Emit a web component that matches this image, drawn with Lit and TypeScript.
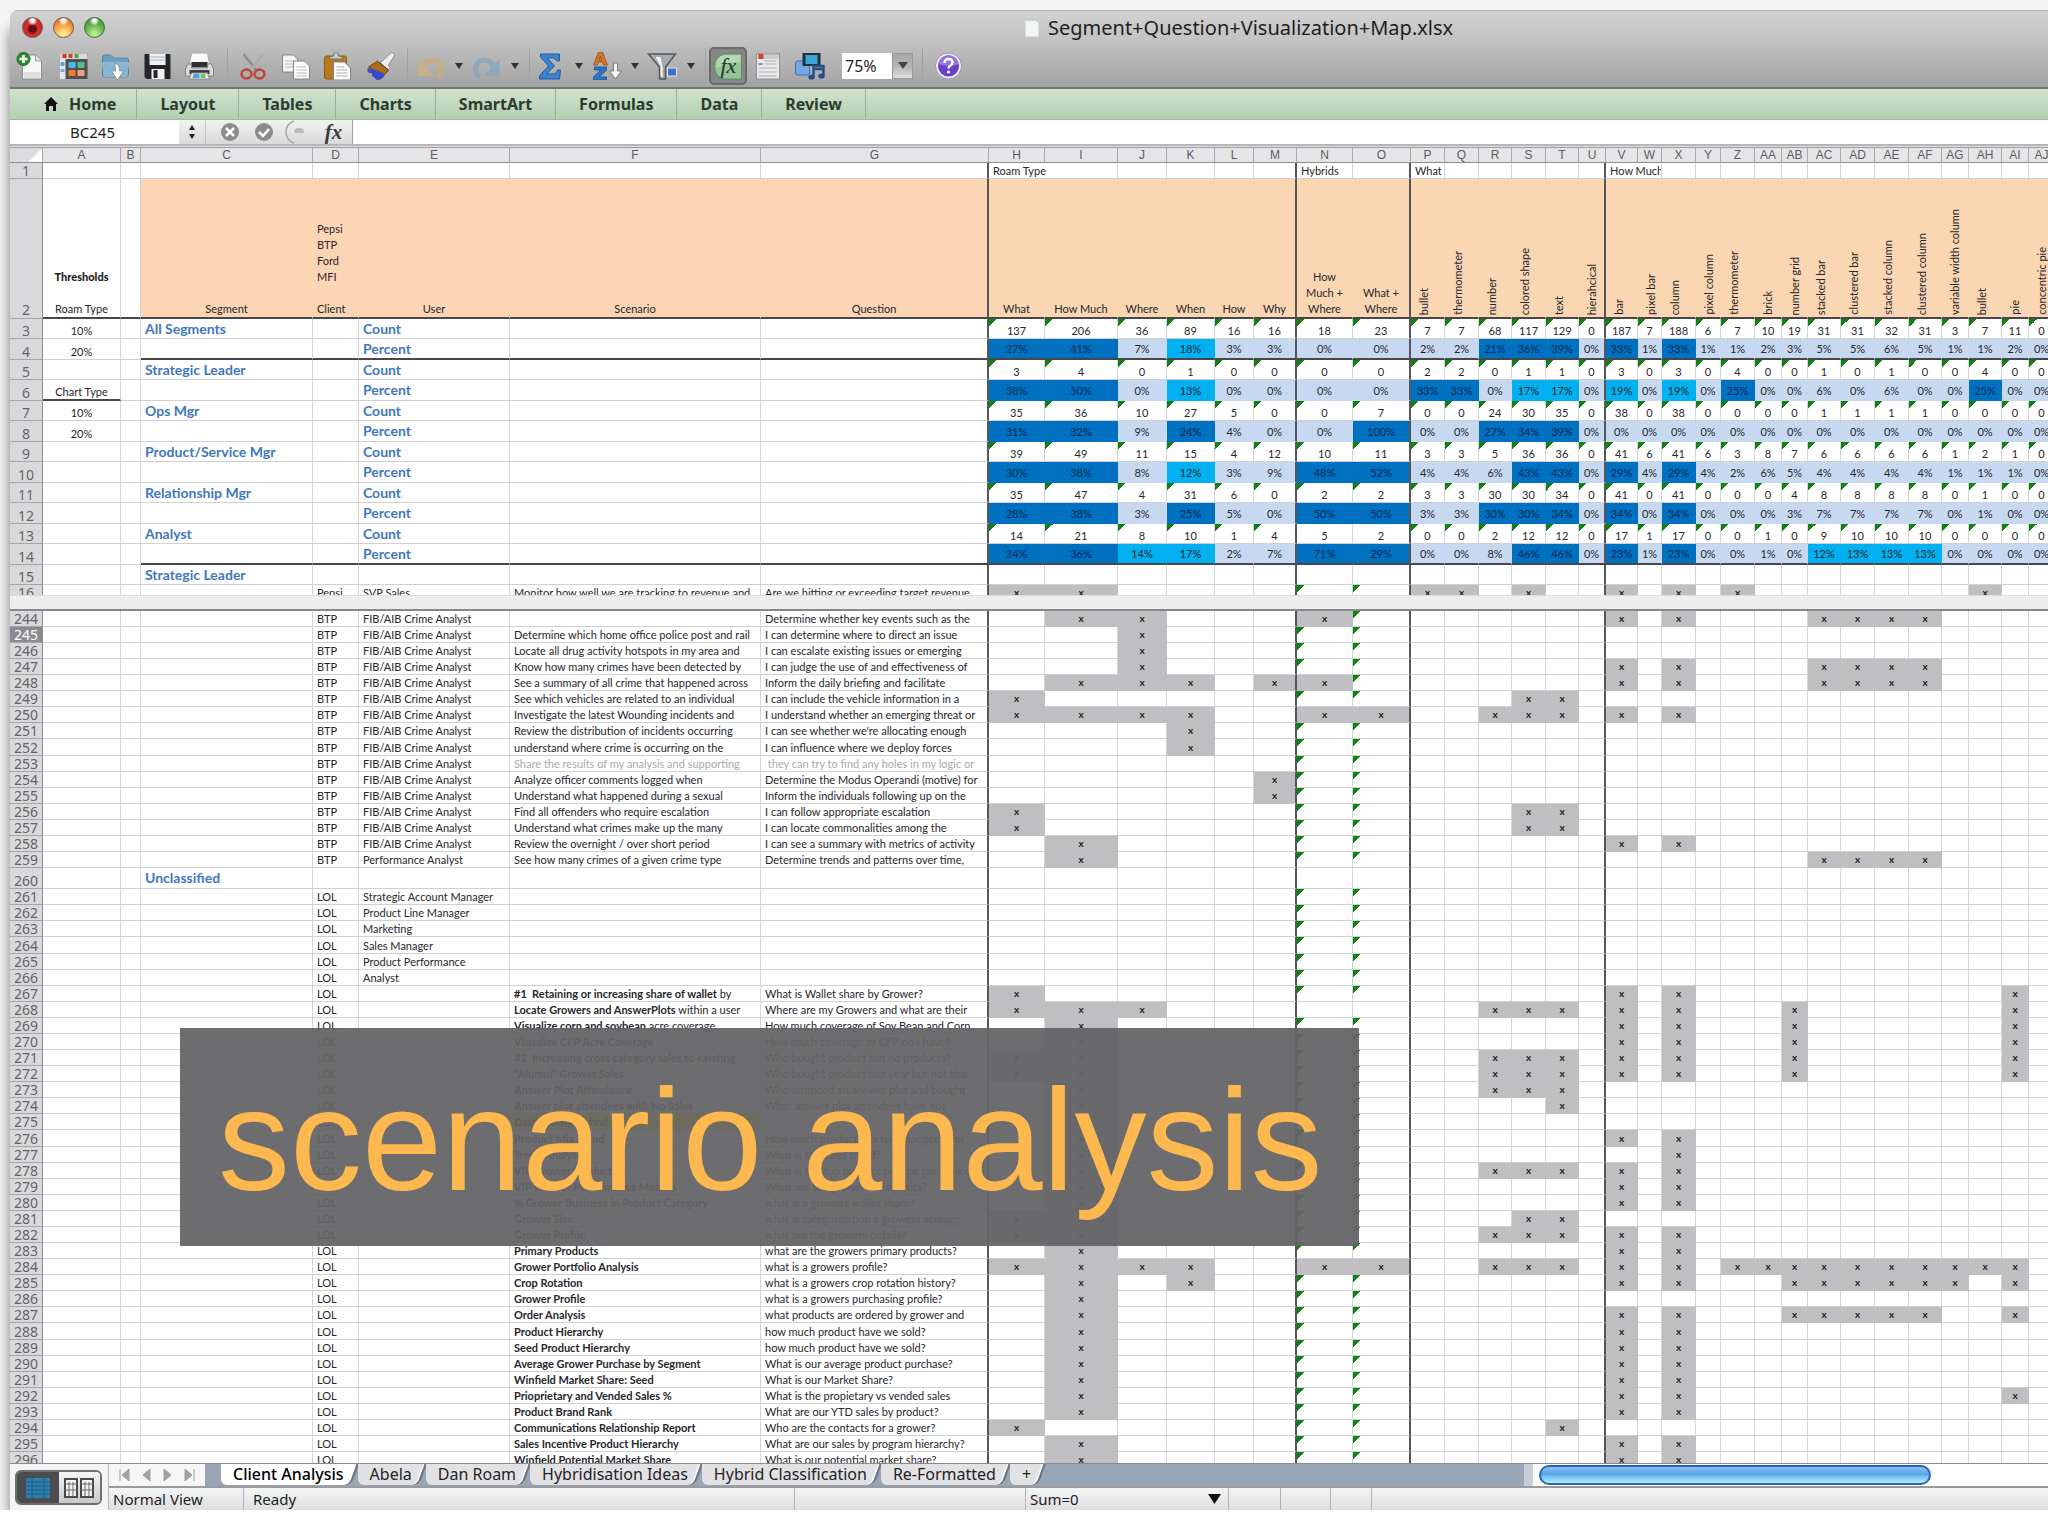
import { LitElement, html, svg, css, nothing, TemplateResult } from "lit";
import { customElement, property } from "lit/decorators.js";
import { classMap } from "lit/directives/class-map.js";

/* ---------- sheet model ---------- */

const COLS: [string, number][] = [
  ["A", 78], ["B", 20], ["C", 172], ["D", 46], ["E", 151], ["F", 251], ["G", 228],
  ["H", 56], ["I", 73], ["J", 49], ["K", 48], ["L", 39], ["M", 43], ["N", 56], ["O", 58],
  ["P", 34], ["Q", 34], ["R", 33], ["S", 34], ["T", 33], ["U", 27],
  ["V", 32], ["W", 24], ["X", 34], ["Y", 25], ["Z", 34], ["AA", 27], ["AB", 26], ["AC", 33],
  ["AD", 34], ["AE", 34], ["AF", 33], ["AG", 27], ["AH", 33], ["AI", 27], ["AJ", 26],
];
const HEAD_W = 33;
const TOTAL_W = HEAD_W + COLS.reduce((sum, c) => sum + c[1], 0);
const NAMES = COLS.map((c) => c[0]);
const DATA = NAMES.slice(7);
const HEAVY = new Set(["G", "M", "O", "U"]);

const HEADINGS: Record<string, string[]> = {
  A: ["Thresholds", "", "Roam Type"], C: ["Segment"],
  D: ["Pepsi", "BTP", "Ford", "MFI", "", "Client"],
  E: ["User"], F: ["Scenario"], G: ["Question"], H: ["What"], I: ["How Much"], J: ["Where"],
  K: ["When"], L: ["How"], M: ["Why"], N: ["How", "Much +", "Where"], O: ["What +", "Where"],
};
const VERTICAL: Record<string, string> = {
  P: "bullet", Q: "thermometer", R: "number", S: "colored shape", T: "text", U: "hierahcical",
  V: "bar", W: "pixel bar", X: "column", Y: "pixel column", Z: "thermometer", AA: "brick",
  AB: "number grid", AC: "stacked bar", AD: "clustered bar", AE: "stacked column",
  AF: "clustered column", AG: "variable width column", AH: "bullet", AI: "pie", AJ: "concentric pie",
};

const SEGMENTS: { name: string; count: string; percent: string }[] = [
  { name: "All Segments",
    count: "137 206 36 89 16 16 18 23 7 7 68 117 129 0 187 7 188 6 7 10 19 31 31 32 31 3 7 11 0",
    percent: "27 41 7 18 3 3 0 0 2 2 21 36 39 0 33 1 33 1 1 2 3 5 5 6 5 1 1 2 0" },
  { name: "Strategic Leader",
    count: "3 4 0 1 0 0 0 0 2 2 0 1 1 0 3 0 3 0 4 0 0 1 0 1 0 0 4 0 0",
    percent: "38 50 0 13 0 0 0 0 33 33 0 17 17 0 19 0 19 0 25 0 0 6 0 6 0 0 25 0 0" },
  { name: "Ops Mgr",
    count: "35 36 10 27 5 0 0 7 0 0 24 30 35 0 38 0 38 0 0 0 0 1 1 1 1 0 0 0 0",
    percent: "31 32 9 24 4 0 0 100 0 0 27 34 39 0 0 0 0 0 0 0 0 0 0 0 0 0 0 0 0" },
  { name: "Product/Service Mgr",
    count: "39 49 11 15 4 12 10 11 3 3 5 36 36 0 41 6 41 6 3 8 7 6 6 6 6 1 2 1 0",
    percent: "30 38 8 12 3 9 48 52 4 4 6 43 43 0 29 4 29 4 2 6 5 4 4 4 4 1 1 1 0" },
  { name: "Relationship Mgr",
    count: "35 47 4 31 6 0 2 2 3 3 30 30 34 0 41 0 41 0 0 0 4 8 8 8 8 0 1 0 0",
    percent: "28 38 3 25 5 0 50 50 3 3 30 30 34 0 34 0 34 0 0 0 3 7 7 7 7 0 1 0 0" },
  { name: "Analyst",
    count: "14 21 8 10 1 4 5 2 0 0 2 12 12 0 17 1 17 0 0 1 0 9 10 10 10 0 0 0 0",
    percent: "24 36 14 17 2 7 71 29 0 0 8 46 46 0 23 1 23 0 0 1 0 12 13 13 13 0 0 0 0" },
];
const THRESHOLDS: Record<number, string> = { 3: "10%", 4: "20%", 6: "Chart Type", 7: "10%", 8: "20%" };

interface Row {
  n: number; client?: string; user?: string; bold?: string; scenario?: string; question?: string;
  marks: string; flags: string; section?: string; dim?: boolean; lit?: boolean;
}
const FIB = "FIB/AIB Crime Analyst";
const btp = (n: number, scenario: string, question: string, marks = "", flags = "N O", user = FIB): Row =>
  ({ n, client: "BTP", user, scenario, question, marks, flags });
const lol = (n: number, bold: string, question: string, marks = "", flags = "N O", scenario = ""): Row =>
  ({ n, client: "LOL", bold, scenario, question, marks, flags });
const person = (n: number, user: string): Row => ({ n, client: "LOL", user, marks: "", flags: "N O" });

const ROW_16: Row = {
  n: 16, client: "Pepsi", user: "SVP Sales",
  scenario: "Monitor how well we are tracking to revenue and",
  question: "Are we hitting or exceeding target revenue",
  marks: "H I P Q S V X Z AH", flags: "N O",
};

const LOWER: Row[] = [
  btp(244, "", "Determine whether key events such as the", "I J N V X AC AD AE AF", "O"),
  btp(245, "Determine which home office police post and rail", "I can determine where to direct an issue", "J"),
  btp(246, "Locate all drug activity hotspots in my area and", "I can escalate existing issues or emerging", "J"),
  btp(247, "Know how many crimes have been detected by", "I can judge the use of and effectiveness of", "J V X AC AD AE AF"),
  btp(248, "See a summary of all crime that happened across", "Inform the daily briefing and facilitate", "I J K M N V X AC AD AE AF", "O"),
  btp(249, "See which vehicles are related to an individual", "I can include the vehicle information in a", "H S T"),
  btp(250, "Investigate the latest Wounding incidents and", "I understand whether an emerging threat or", "H I J K N O R S T V X", ""),
  btp(251, "Review the distribution of incidents occurring", "I can see whether we're allocating enough", "K"),
  btp(252, "understand where crime is occurring on the", "I can influence where we deploy forces", "K"),
  { ...btp(253, "Share the results of my analysis and supporting", "\u00a0they can try to find any holes in my logic or"), dim: true },
  btp(254, "Analyze officer comments logged when", "Determine the Modus Operandi (motive) for", "M"),
  btp(255, "Understand what happened during a sexual", "Inform the individuals following up on the", "M"),
  btp(256, "Find all offenders who require escalation", "I can follow appropriate escalation", "H S T"),
  btp(257, "Understand what crimes make up the many", "I can locate commonalities among the", "H S T"),
  btp(258, "Review the overnight / over short period", "I can see a summary with metrics of activity", "I V X"),
  btp(259, "See how many crimes of a given crime type", "Determine trends and patterns over time,", "I AC AD AE AF", "N O", "Performance Analyst"),
  { n: 260, section: "Unclassified", marks: "", flags: "" },
  person(261, "Strategic Account Manager"),
  person(262, "Product Line Manager"),
  person(263, "Marketing"),
  person(264, "Sales Manager"),
  person(265, "Product Performance"),
  person(266, "Analyst"),
  lol(267, "#1\u00a0 Retaining or increasing share of wallet", "What is Wallet share by Grower?", "H V X AI", "N O", " by"),
  lol(268, "Locate Growers and AnswerPlots", "Where are my Growers and what are their", "H I J R S T V X AB AI", "", " within a user"),
  lol(269, "Visualize corn and soybean", "How much coverage of Soy Bean and Corn", "I V X AB AI", "N O", " acre coverage"),
  lol(270, "Visualize CFP Acre Coverage", "How much coverage of CFP do I have?", "I V X AB AI"),
  lol(271, "#2\u00a0 Increasing cross category sales to existing", "Who bought product but no products?", "H I R S T V X AB AI"),
  lol(272, "\"Alumni\" Grower Sales", "Who bought product last year but not this", "H I R S T V X AB AI"),
  lol(273, "Answer Plot Attendance", "Who attended an answer plot and bought", "I R S T"),
  lol(274, "Answer plot attendees with No Sales", "What answer plot attendees have not", "I T"),
  { ...lol(275, "Data mining to find", "", "I"), lit: true },
  lol(276, "Product Mix Trend", "How much product mix has changed over", "I V X"),
  lol(277, "Trend Analysis", "What is the sales trend?", "I X"),
  lol(278, "VIP Grower Products", "What is the top product by type purchased", "I R S T V X"),
  lol(279, "VIP Grower Performance Metrics", "What are the grower key metrics?", "I V X"),
  lol(280, "% Grower Business in Product Category", "what is a growers wallet share?", "I V X"),
  lol(281, "Grower Size", "what is categorization a growers acreage", "H I S T"),
  lol(282, "Grower Profile", "what are the growers details?", "H I R S T V X"),
  lol(283, "Primary Products", "what are the growers primary products?", "I V X"),
  lol(284, "Grower Portfolio Analysis", "what is a growers profile?", "H I J K N O R S T V X Z AA AB AC AD AE AF AG AH AI", ""),
  lol(285, "Crop Rotation", "what is a growers crop rotation history?", "I K V X AB AC AD AE AF AG AI"),
  lol(286, "Grower Profile", "what is a growers purchasing profile?", "I"),
  lol(287, "Order Analysis", "what products are ordered by grower and", "I V X AB AC AD AE AF AI"),
  lol(288, "Product Hierarchy", "how much product have we sold?", "I V X"),
  lol(289, "Seed Product Hierarchy", "how much product have we sold?", "I V X"),
  lol(290, "Average Grower Purchase by Segment", "What is our average product purchase?", "I V X"),
  lol(291, "Winfield Market Share: Seed", "What is our Market Share?", "I V X"),
  lol(292, "Prioprietary and Vended Sales %", "What is the propietary vs vended sales", "I V X AI"),
  lol(293, "Product Brand Rank", "What are our YTD sales by product?", "I V X"),
  lol(294, "Communications Relationship Report", "Who are the contacts for a grower?", "H T"),
  lol(295, "Sales Incentive Product Hierarchy", "What are our sales by program hierarchy?", "I V X"),
  lol(296, "Winfield Potential Market Share", "What is our potential market share?", "I V X"),
];

/* ---------- icons ---------- */

const ICONS: Record<string, TemplateResult> = {
  new: svg`<path d="M6 3h13l6 6v18H6z" fill="#f6f7f6" stroke="#8e8e8e"/><path d="M19 3v6h6" fill="#dfe3df" stroke="#9a9a9a"/>
    <rect x="7" y="20" width="17" height="6" fill="#dde2dd"/><circle cx="7" cy="7" r="6.5" fill="#2f8a2c" stroke="#1d6a1f"/><path d="M7 3v8M3 7h8" stroke="#fff" stroke-width="2.6"/>`,
  gallery: svg`<rect x="1" y="2" width="28" height="25" fill="#4d4f52"/><rect x="1" y="2" width="28" height="5" fill="#d8dadb"/>
    <rect x="4" y="2" width="4" height="4" fill="#d9331f"/><rect x="10" y="2" width="4" height="4" fill="#c7452b"/><rect x="16" y="2" width="4" height="4" fill="#4fa53a"/>
    <rect x="1" y="7" width="6" height="20" fill="#dfe7f3"/><rect x="2" y="10" width="4" height="4" fill="#6d9bd8"/><rect x="2" y="17" width="4" height="3" fill="#9ab"/>
    <rect x="10" y="10" width="7" height="6" rx="1" fill="#4fb7e8"/><rect x="19" y="10" width="7" height="6" rx="1" fill="#52c08a"/>
    <rect x="10" y="18" width="7" height="6" rx="1" fill="#f07b32"/><rect x="19" y="18" width="7" height="6" rx="1" fill="#f3a17d"/>`,
  open: svg`<path d="M2 5q0-2 2-2h6l3 3h13q2 0 2 2v14q0 3-3 3H5q-3 0-3-3z" fill="#6e9fbf" stroke="#4f829f"/>
    <path d="M1 10h28l-2 13q0 2-3 2H6q-3 0-3-2z" fill="#8ab6d2"/><path d="M14 11q5 1 5 8h4l-6 9-6-9h4q0-5-1-8z" fill="#fff" stroke="#7d8b94" stroke-width=".8"/>`,
  save: svg`<path d="M2 2h25l1 1v24H4l-2-2z" fill="#24262a"/><rect x="7" y="2" width="16" height="11" fill="#eef1f5"/>
    <path d="M8 5h14M8 8h14" stroke="#9db0c6"/><rect x="9" y="17" width="13" height="10" fill="#f2f2f2"/><rect x="11" y="18" width="4" height="8" fill="#24262a"/>`,
  print: svg`<path d="M7 1h16l2 11H5z" fill="#fafafa" stroke="#aaa"/><path d="M7 10h16v5H7z" fill="#2e2f31"/>
    <path d="M3 12h4v4h16v-4h4l2 5v7H1v-7z" fill="#d9dadb" stroke="#808080"/><path d="M5 18h20v4H5z" fill="#3c3d3f"/>
    <path d="M7 21h16l2 6H5z" fill="#f3f6f8" stroke="#8a8a8a"/><path d="M9 22h6v4H8z" fill="#49a0dc"/><path d="M16 22h5v4h-5z" fill="#6ec06b"/>`,
  cut: svg`<path d="M5 2l14 18" stroke="#8b8f93" stroke-width="2.4"/><path d="M24 3L11 20" stroke="#a9adb0" stroke-width="2.4"/>
    <ellipse cx="8" cy="22" rx="5" ry="4.5" fill="none" stroke="#bf4430" stroke-width="2.4"/><ellipse cx="21" cy="22" rx="5" ry="4.5" fill="none" stroke="#bf4430" stroke-width="2.4"/>`,
  copy: svg`<path d="M2 3h11l4 4v13H2z" fill="#f2f3f4" stroke="#858585"/><path d="M5 9h9M5 12h9M5 15h9" stroke="#b8bcc0"/>
    <path d="M13 9h11l5 5v13H13z" fill="#fafafa" stroke="#858585"/><path d="M16 15h9M16 18h10M16 21h10M16 24h10" stroke="#b8bcc0"/>`,
  paste: svg`<rect x="2" y="4" width="22" height="23" rx="2" fill="#b87a1c" stroke="#8d5b10"/><path d="M7 7V5l4-1q0-4 2.5-4T16 4l4 1v2z" fill="#c9cdd0" stroke="#6f7375"/>
    <path d="M11 10h11l6 6v12H11z" fill="#fbfbfb" stroke="#848484"/><path d="M14 15h8M14 18h11M14 21h11M14 24h11" stroke="#a9aeb2"/>`,
  brush: svg`<path d="M18 9l7-7q2-2 4-1t0 4l-5 8q3 3 0 5l-8-7q-1-1 2-2z" fill="#eceded" stroke="#8b8f91"/>
    <path d="M13 9l11 9-5 6L4 15z" fill="#a96c1c" stroke="#6b430c"/><path d="M3 16q8 1 17 6-1 6-8 6-2-3-5-4l1-2-5-2z" fill="#3b49c4"/>`,
  undo: svg`<path d="M9 17q0-9 9-9 8 1 8 9 0 5-4 8" fill="none" stroke="#c9ae7d" stroke-width="5"/><path d="M2 7v17h16z" fill="#cdb486"/>`,
  redo: svg`<path d="M21 17q0-9-9-9-8 1-8 9 0 5 4 8" fill="none" stroke="#86a6c0" stroke-width="5"/><path d="M28 7v17H12z" fill="#86a6c0"/>`,
  sum: svg`<path d="M5 2h19v7h-3q-1-3-4-3h-5l7 8-8 8h7q4 0 4-4h3l-1 9H4v-3l9-10-8-9z" fill="#3d82cf" stroke="#1f5aa6"/>`,
  sort: svg`<path d="M7 0h4l5 13h-4l-1-3H7l-1 3H2zM9 4l-1 4h2z" fill="#d0782a" stroke="#9b4d12" stroke-width=".8"/>
    <path d="M3 15h12v3l-7 7h7v3H2v-3l7-7H3z" fill="#2f74c8" stroke="#1c4f96" stroke-width=".8"/><path d="M22 11h4v8h4l-6 8-6-8h4z" fill="#f4f4f4" stroke="#7c7c7c"/>`,
  filter: svg`<path d="M1 2h27L18 15v12h-6V15z" fill="#a9acae" stroke="#55585a" stroke-width="1.5"/><path d="M8 5h5l2 10v10l-2-1V14z" fill="#f4f5f5"/>
    <rect x="20" y="16" width="9" height="8" fill="#3f6fd0" stroke="#dde6f8"/>`,
  fx: svg`<path d="M12 2h17v25H12Q2 25 2 14.5T12 2z" fill="#93c597" stroke="#5c8f62"/><path d="M12 3h16v7Q14 10 4 16 3 5 12 3z" fill="#b4d8b4"/>
    <text x="8" y="21" font-family="Liberation Serif, serif" font-style="italic" font-size="22" fill="#203524">fx</text>`,
  box: svg`<rect x="4" y="2" width="23" height="25" fill="#e9e9ea" stroke="#8d8d8d"/><rect x="5" y="3" width="21" height="4" fill="#c9ccd0"/><rect x="6" y="2" width="5" height="5" fill="#d8402c"/>
    <path d="M6 12h4" stroke="#6c8fc8" stroke-width="2"/><path d="M12 9h12M12 12h12M6 16h18M6 20h18M6 24h18" stroke="#bfc2c6" stroke-width="1.5"/>`,
  media: svg`<rect x="1" y="9" width="14" height="14" rx="2" fill="#76a6e6" stroke="#3a69b0"/><rect x="8" y="1" width="18" height="13" fill="#20323e"/><rect x="11" y="3" width="12" height="9" fill="#39a6d4"/>
    <path d="M19 25V14h10v10M19 17h10" fill="none" stroke="#234f86" stroke-width="2.4"/><ellipse cx="17" cy="25" rx="3.2" ry="2.6" fill="#234f86"/><ellipse cx="27" cy="24" rx="3.2" ry="2.6" fill="#234f86"/>`,
  help: svg`<circle cx="15" cy="14" r="13" fill="#f1ecfb" stroke="#9a93ab"/><circle cx="15" cy="14" r="10.5" fill="#6a41c8"/>
    <path d="M5 12a10 9 0 0 1 20 0q-10 4-20 0z" fill="#9677e0"/><path d="M11 11q0-4 4-4t4 3.5q0 2-2 3t-2 3" fill="none" stroke="#fff" stroke-width="2.4"/><circle cx="15" cy="20" r="1.6" fill="#fff"/>`,
};

/* ---------- grid pane ---------- */

const gridText = css`"Lato", "Open Sans", "Liberation Sans", sans-serif`;
const uiText = css`"Noto Sans", "Open Sans", "Liberation Sans", sans-serif`;

@customElement("sheet-pane")
class SheetPane extends LitElement {
  @property() pane = "upper";

  static styles = css`
    :host { display: block; overflow: hidden; background: #fff; }
    table { border-collapse: separate; border-spacing: 0; table-layout: fixed; font: 11px/15px ${gridText}; color: #26262b; }
    td, th { box-sizing: border-box; padding: 0; overflow: hidden; white-space: nowrap; vertical-align: bottom; border-right: 1px solid #d3d3d8; border-bottom: 1px solid #cfcfd4; font-weight: 400; text-align: center; }
    .col { height: 15px; font: 12px/14px "Liberation Sans", Arial, sans-serif; color: #5d5d60; background: #e5e5e7; border-color: #a9a9ac; border-bottom-color: #8d8d90; }
    .corner { background: linear-gradient(135deg, #dcdcde 70%, #fff 70%); }
    .num { overflow: visible; font: 14px/15px ${uiText}; color: #646467; background: #d9d9dc; border-right-color: #8f8f92; border-bottom-color: #a4a4a8; }
    .num.on { background: #8b8b8f; color: #fff; }
    .left { text-align: left; padding-left: 4px; }
    .heavy { border-right: 2px solid #56565a; }
    .r16 > * { height: 16px; }
    .r17 > * { height: 17px; }
    .r20 > * { height: 20px; }
    .r21 > * { height: 21px; }
    .r140 > * { height: 140px; border-bottom: 2px solid #47474a; line-height: 16px; }
    .r140 .num { border-bottom: 1px solid #a4a4a8; }
    .peach { background: #fcd5b5; border-right-color: #fcd5b5; }
    .sand { background: #fad6b3; border-right-color: #fad6b3; }
    .peach.heavy, .sand.heavy { border-right-color: #56565a; }
    .ruled { border-bottom: 2px solid #47474a; }
    .strong { font-weight: 900; color: #1d1d20; }
    .label { font-size: 14px; line-height: 18px; font-weight: 700; color: #3f77bf; vertical-align: middle; }
    .tilt { text-align: left; padding-left: 5px; }
    .up { display: block; width: 16px; writing-mode: vertical-rl; transform: rotate(180deg); line-height: 16px; padding-top: 2px; }
    .pc { background: #c6d9f1; border-color: #c6d9f1; vertical-align: middle; }
    .mid { background: #00b0f0; border-color: #00b0f0; }
    .dark { background: #0070c0; border-color: #0070c0; color: #052a55; }
    .pc.heavy { border-right-color: #56565a; }
    .pc.ruled { border-bottom-color: #47474a; }
    .mark { background: #bfbfc1; border-color: #bfbfc1; color: #222; font-weight: 700; font-size: 10px; }
    .mark.heavy { border-right-color: #56565a; }
    .flag { background: linear-gradient(to bottom right, #128012 50%, transparent 50%) no-repeat 0 0 / 8px 8px; }
    .dim { color: #a9a9ad; }
    .lit { background: #f6f000; }
  `;

  private colgroup() {
    return html`<colgroup><col style="width:${HEAD_W}px">${COLS.map((c) => html`<col style="width:${c[1]}px">`)}</colgroup>`;
  }

  private data(r: Row, c: string) {
    const marked = r.marks.split(" ").includes(c);
    const flag = !marked && r.flags.split(" ").includes(c);
    return html`<td class=${classMap({ mark: marked, flag, heavy: HEAVY.has(c) })}>${marked ? "x" : nothing}</td>`;
  }

  private row(r: Row) {
    const size = r.section ? "r21" : r.n % 12 === 0 ? "r17" : "r16";
    return html`<tr class=${size}>
      <th scope="row" class=${classMap({ num: true, on: r.n === 245 })}>${r.n}</th>
      <td></td><td></td>
      <td class="left label">${r.section ?? nothing}</td>
      <td class="left">${r.client ?? nothing}</td>
      <td class="left">${r.user ?? nothing}</td>
      <td class=${classMap({ left: true, dim: !!r.dim, lit: !!r.lit })}>${r.bold ? html`<b>${r.bold}</b>` : nothing}${r.scenario ?? nothing}</td>
      <td class=${classMap({ left: true, heavy: true, dim: !!r.dim })}>${r.question ?? nothing}</td>
      ${DATA.map((c) => this.data(r, c))}
    </tr>`;
  }

  private groupRow() {
    const spans: Record<string, string> = { H: "Roam Type", N: "Hybrids", P: "What", V: "How Much" };
    const wide = new Set(["H", "V"]);
    return html`<tr class="r16"><th scope="row" class="num">1</th>
      ${NAMES.map((c) => c === "I" || c === "W" ? nothing
        : html`<td class=${classMap({ left: c in spans, heavy: HEAVY.has(c) })} colspan=${wide.has(c) ? 2 : 1}>${spans[c] ?? nothing}</td>`)}
    </tr>`;
  }

  private headingRow() {
    return html`<tr class="r140"><th scope="row" class="num">2</th>
      ${NAMES.map((c, i) => {
        const cls = classMap({ peach: i > 1 && i < 7, sand: i >= 7, heavy: HEAVY.has(c), left: c === "D", tilt: c in VERTICAL });
        if (VERTICAL[c]) return html`<td class=${cls}><span class="up">${VERTICAL[c]}</span></td>`;
        return html`<td class=${cls}>${(HEADINGS[c] ?? []).map((t) => html`<div class=${t === "Thresholds" ? "strong" : ""}>${t || "\u00a0"}</div>`)}</td>`;
      })}</tr>`;
  }

  private statRow(n: number, name: string, values: string, percent: boolean) {
    const ruled = n === 4 || n === 14;
    const edge = { ruled };
    return html`<tr class=${percent ? "r21" : "r20"}>
      <th scope="row" class="num">${n}</th>
      <td class=${classMap({ ruled: n === 6 })}>${THRESHOLDS[n] ?? nothing}</td>
      <td></td>
      <td class=${classMap({ left: true, label: true, ...edge })}>${percent ? nothing : name}</td>
      <td class=${classMap(edge)}></td>
      <td class=${classMap({ left: true, label: true, ...edge })}>${percent ? "Percent" : "Count"}</td>
      <td class=${classMap(edge)}></td>
      <td class=${classMap({ heavy: true, ...edge })}></td>
      ${values.split(" ").map((v, i) => {
        const c = DATA[i];
        const heavy = HEAVY.has(c);
        if (!percent) return html`<td class=${classMap({ flag: !(n === 13 && (c === "N" || c === "O")), heavy })}>${v}</td>`;
        return html`<td class=${classMap({ pc: true, mid: +v >= 10 && +v < 20, dark: +v >= 20, heavy, ...edge })}>${v}%</td>`;
      })}
    </tr>`;
  }

  private upper() {
    return html`<thead><tr><th class="col corner" aria-label="Select all"></th>${NAMES.map((c) => html`<th scope="col" class="col">${c}</th>`)}</tr></thead>
      <tbody>${this.groupRow()}${this.headingRow()}
        ${SEGMENTS.map((s, i) => [this.statRow(3 + i * 2, s.name, s.count, false), this.statRow(4 + i * 2, s.name, s.percent, true)])}
        <tr class="r20"><th scope="row" class="num">15</th>
          ${NAMES.map((c) => html`<td class=${classMap({ left: c === "C", label: c === "C", heavy: HEAVY.has(c) })}>${c === "C" ? "Strategic Leader" : nothing}</td>`)}</tr>
        ${this.row(ROW_16)}</tbody>`;
  }

  render() {
    return html`<table style="width:${TOTAL_W}px">${this.colgroup()}
      ${this.pane === "upper" ? this.upper() : html`<tbody>${LOWER.map((r) => this.row(r))}</tbody>`}
    </table>`;
  }
}

/* ---------- application window ---------- */

@customElement("app-root")
class AppRoot extends LitElement {
  static styles = css`
    :host { display: block; box-sizing: border-box; height: 100vh; padding-bottom: 26px; background: #fff; font: 16px/20px ${uiText}; color: #1e1e1e; overflow: hidden; }
    * { box-sizing: border-box; }
    button, input, select { font: inherit; color: inherit; border: 0; margin: 0; padding: 0; background: none; border-radius: 0; }
    .stage { height: 100%; padding: 10px 0 0 10px; overflow: hidden; background: #f5f5f5; }
    .window { position: relative; height: 100%; display: flex; flex-direction: column; border-radius: 8px 0 0 0; box-shadow: 0 18px 14px rgba(0, 0, 0, .5); background: #e9e9eb; overflow: hidden; }
    .chrome { background: linear-gradient(#d2d2d2, #c4c4c4 35%, #a3a3a3); border-bottom: 2px solid #747474; border-top: 1px solid #b5b5b5; height: 79px; display: flex; flex-direction: column; }
    .title { display: grid; grid-template-columns: 1fr 1fr; align-items: center; height: 33px; padding-right: 10px; }
    .lights { display: flex; gap: 10px; padding-left: 12px; }
    .light { width: 21px; height: 21px; border-radius: 50%; border: 1px solid #6d5a50; }
    .red { background: radial-gradient(circle at 50% 14%, #fff 0 8%, transparent 26%), radial-gradient(circle at 50% 58%, #6b0d10 0 22%, #d92f35 42%, #b8161f); }
    .amber { background: radial-gradient(circle at 50% 14%, #fff 0 8%, transparent 26%), radial-gradient(circle at 50% 85%, #ffe98c 0 10%, #f5983c 55%, #c8602a); }
    .green { background: radial-gradient(circle at 50% 14%, #fff 0 8%, transparent 26%), radial-gradient(circle at 50% 85%, #b4ea8c 0 10%, #5fb04c 55%, #357a2e); border-color: #3d6a3a; }
    .name { display: flex; align-items: center; gap: 8px; margin: 0; font-size: 20px; font-weight: 400; line-height: 24px; white-space: nowrap; }
    .tools { display: flex; align-items: center; height: 43px; padding-left: 1px; }
    .tool { width: 42px; height: 36px; display: grid; place-items: center; }
    .tool.slim { width: 36px; }
    .tool.on { width: 38px; height: 38px; border-radius: 5px; background: #868686; border: 2px solid #6a6a6a; }
    .faded { opacity: .8; }
    .caret { width: 20px; height: 36px; display: grid; place-items: center; }
    .rule { width: 12px; height: 36px; background: linear-gradient(#a2a2a2, #a2a2a2) no-repeat center / 1px 100%; }
    .rule.thin { width: 8px; }
    .rule.wide { width: 18px; }
    .zoom { position: relative; margin-left: 11px; width: 71px; height: 26px; background: #fff; }
    .zoom select { appearance: none; width: 100%; height: 100%; padding-left: 3px; font-size: 16px; }
    .zoom span { position: absolute; top: 0; right: 0; width: 21px; height: 26px; display: grid; place-items: center; background: linear-gradient(#a9a9a9, #b4b4b4 50%, #dedede); border: 1px solid #9b9b9b; pointer-events: none; }
    .ribbon { display: flex; height: 31px; background: linear-gradient(#d3e2d0, #b3cfb1); border-bottom: 1px solid #9fbd9e; }
    .ribbon button { display: flex; align-items: center; gap: 11px; padding: 0 23px; font-size: 16px; font-weight: 700; color: #2c3b30; border-right: 1px solid #97b097; }
    .ribbon .home { padding: 0 20px 0 34px; }
    .formula { display: flex; align-items: center; height: 24px; background: linear-gradient(#f2f2f2, #d9d9d9); }
    .cellname { width: 169px; height: 24px; background: #fff; text-align: center; font-size: 15px; padding-right: 0; padding-left: 4px; border-right: 8px solid #fff; }
    .step { width: 27px; height: 24px; display: grid; place-items: center; border-right: 1px solid #c4c4c4; }
    .fbtn { width: 34px; height: 24px; display: grid; place-items: center; }
    .fbtn.first { margin-left: 7px; }
    .fbtn.fx { font: italic bold 21px/22px "Liberation Serif", serif; color: #3b3b3b; width: 38px; border-right: 1px solid #a2a2a2; }
    .entry { flex: 1; height: 24px; background: #fff; }
    .gap { height: 4px; background: #e3e3e5; border-top: 2px solid #b5b5b8; border-bottom: 1px solid #9c9c9f; }
    .top { flex: 0 0 447px; }
    .split { flex: 0 0 16px; background: #eeeeef; border-top: 1px solid #dcdcde; border-bottom: 2px solid #88888b; }
    .bottom { flex: 1; min-height: 0; }
    .foot { flex: 0 0 47px; display: grid; grid-template-columns: 98px 1fr; border-top: 1px solid #8b8b8f; background: #f4f4f5; }
    .views { display: flex; margin: 6px 6px 5px 5px; border: 2px solid #6f6f72; border-radius: 6px; overflow: hidden; }
    .views button { flex: 1; display: grid; place-items: center; background: linear-gradient(#f4f4f4, #c9c9cb); }
    .views .on { background: #4b4c4f; }
    .lines { display: grid; grid-template-rows: 24px 22px; min-width: 0; border-left: 1px solid #b5b5b8; }
    .strip { display: flex; background: #98a5b6; border-bottom: 2px solid #9a9a9d; }
    .nav { display: flex; align-items: center; justify-content: space-between; width: 96px; padding: 0 10px; background: #f6f6f7; }
    .tabs { display: flex; padding-left: 16px; }
    .tab { position: relative; z-index: 0; height: 21px; padding: 0 13px 0 12px; margin-right: 1px; background: linear-gradient(90deg, #e2e2e5 calc(100% - 12px), transparent 0); border-radius: 0 0 0 6px; font-size: 16px; line-height: 19px; white-space: nowrap; color: #222; }
    .tab::after { content: ""; position: absolute; z-index: -1; top: 0; right: 4px; width: 20px; height: 21px; background: #e2e2e5; border-right: 2px solid #fafafa; border-radius: 0 0 6px 0; transform: skewX(-20deg); box-shadow: 2px 0 0 #6c7480; }
    .tab.on { background: linear-gradient(90deg, #fff calc(100% - 12px), transparent 0); font-weight: 500; color: #000; }
    .tab.on::after { background: #fff; }
    .thumbslot { margin-left: auto; flex: 0 0 27%; display: flex; align-items: center; background: #fff; border-left: 9px solid #c7ced8; padding-left: 6px; }
    .thumb { width: 77%; height: 20px; border-radius: 10px; border: 2px solid #2a62b8; background: linear-gradient(#8cc0ef, #5aa4e6 45%, #74c4f7 60%, #b4ecff); }
    .status { display: flex; background: linear-gradient(#f4f5f5, #dfdfe1); font-size: 15px; line-height: 22px; }
    .status > * { padding-left: 4px; border-right: 1px solid #b3b3b6; }
    .s1 { width: 135px; } .s2 { width: 551px; padding-left: 9px; } .s3 { width: 231px; }
    .sum { width: 203px; display: flex; justify-content: space-between; align-items: center; padding-right: 7px; }
    .s5 { width: 52px; } .s6 { width: 50px; } .s7 { width: 41px; }
    .caption { position: absolute; left: 170px; top: 1018px; height: 218px; padding: 0 36px 0 38px; margin: 0; background: rgba(100, 99, 101, .94); color: #fdb94f; font: 144px/226px "Liberation Sans", Arial, sans-serif; white-space: nowrap; }
  `;

  private icon(name: string) {
    return html`<svg width="32" height="28" viewBox="0 0 31 28" aria-hidden="true">${ICONS[name]}</svg>`;
  }
  private tool(name: string, label: string, cls = "") {
    return html`<button class="tool ${cls}" aria-label=${label}>${this.icon(name)}</button>`;
  }
  private caret(label: string) {
    return html`<button class="caret" aria-label=${label}><svg width="8" height="6"><path d="M0 0h8L4 6z" fill="#333"/></svg></button>`;
  }

  render() {
    return html`<div class="stage"><main class="window">
      <header class="chrome">
        <div class="title">
          <div class="lights">
            <button class="light red" aria-label="Close"></button>
            <button class="light amber" aria-label="Minimize"></button>
            <button class="light green" aria-label="Zoom window"></button>
          </div>
          <h1 class="name"><svg width="16" height="20" aria-hidden="true"><path d="M1 1h10l4 4v14H1z" fill="#f3f4f3" stroke="#c3c8c3"/><path d="M1 1h10v2H1z" fill="#bcd8bf"/></svg>Segment+Question+Visualization+Map.xlsx</h1>
        </div>
        <div class="tools">
          ${this.tool("new", "New workbook")}${this.tool("gallery", "Template gallery")}${this.tool("open", "Open")}${this.tool("save", "Save")}${this.tool("print", "Print")}
          <i class="rule"></i>
          ${this.tool("cut", "Cut")}${this.tool("copy", "Copy")}${this.tool("paste", "Paste")}${this.tool("brush", "Format painter")}
          <i class="rule"></i>
          ${this.tool("undo", "Undo", "slim faded")}${this.caret("Undo history")}${this.tool("redo", "Redo", "slim faded")}${this.caret("Redo history")}
          <i class="rule thin"></i>
          ${this.tool("sum", "AutoSum", "slim")}${this.caret("AutoSum options")}${this.tool("sort", "Sort", "slim")}${this.caret("Sort options")}${this.tool("filter", "Filter", "slim")}${this.caret("Filter options")}
          <i class="rule thin"></i>
          ${this.tool("fx", "Formula builder", "on")}${this.tool("box", "Toolbox")}${this.tool("media", "Media browser")}
          <div class="zoom"><select aria-label="Zoom level"><option>75%</option></select><span><svg width="10" height="7"><path d="M0 0h10L5 7z" fill="#444"/></svg></span></div>
          <i class="rule wide"></i>
          ${this.tool("help", "Help", "slim")}
        </div>
      </header>
      <nav class="ribbon" aria-label="Ribbon">
        <button class="home"><svg width="14" height="14" aria-hidden="true"><path d="M7 0l7 7h-2v7H9V9H5v5H2V7H0z" fill="#111"/></svg>Home</button>
        ${["Layout", "Tables", "Charts", "SmartArt", "Formulas", "Data", "Review"].map((t) => html`<button>${t}</button>`)}
      </nav>
      <div class="formula">
        <input class="cellname" aria-label="Cell name" value="BC245">
        <button class="step" aria-label="Named ranges"><svg width="6" height="16"><path d="M0 6l3-5 3 5zM0 10h6l-3 5z" fill="#222"/></svg></button>
        <button class="fbtn first" aria-label="Cancel"><svg width="18" height="18"><circle cx="9" cy="9" r="9" fill="#8c8c8e"/><path d="M5 5l8 8M13 5l-8 8" stroke="#fff" stroke-width="2.5"/></svg></button>
        <button class="fbtn" aria-label="Enter"><svg width="18" height="18"><circle cx="9" cy="9" r="9" fill="#8c8c8e"/><path d="M4 9l4 4 6-7" fill="none" stroke="#fff" stroke-width="2.5"/></svg></button>
        <button class="fbtn" aria-label="Formula history"><svg width="28" height="24"><path d="M10 1Q2 4 2 12t8 11" fill="none" stroke="#a6a6a8" stroke-width="1.5"/><path d="M10 13q0-5 5-5t5 5z" fill="#b9b9c0"/></svg></button>
        <button class="fbtn fx" aria-label="Insert function">fx</button>
        <input class="entry" aria-label="Formula">
      </div>
      <div class="gap"></div>
      <sheet-pane class="top" .pane=${"upper"}></sheet-pane>
      <div class="split" role="separator"></div>
      <sheet-pane class="bottom" .pane=${"lower"}></sheet-pane>
      <footer class="foot">
        <div class="views">
          <button class="on" aria-label="Normal view button"><svg width="24" height="20"><rect width="24" height="20" fill="#2f7fae"/><path d="M0 4h24M0 8h24M0 12h24M0 16h24M6 0v20M18 0v20" stroke="#1d5f88"/></svg></button>
          <button aria-label="Page layout view"><svg width="30" height="20"><path d="M1 1h12v18H1zM17 1h12v18H17z" fill="#f2f2f2" stroke="#48484a" stroke-width="2"/><path d="M1 6h12M1 12h12M5 4v15M9 4v15M17 6h12M17 12h12M21 4v15M25 4v15" stroke="#6a6a6c"/></svg></button>
        </div>
        <div class="lines">
          <div class="strip">
            <div class="nav">
              ${["M1 0v12M10 0L3 6l7 6z", "M9 0L2 6l7 6z", "M2 0l7 6-7 6z", "M10 0v12M1 0l7 6-7 6z"].map((d, i) => html`<button aria-label=${["First sheet", "Previous sheet", "Next sheet", "Last sheet"][i]}><svg width="11" height="12"><path d=${d} fill="#a0a0a4" stroke="#a0a0a4"/></svg></button>`)}
            </div>
            <div class="tabs">
              ${["Client Analysis", "Abela", "Dan Roam", "Hybridisation Ideas", "Hybrid Classification", "Re-Formatted", "+"].map((t, i) => html`<button class="tab ${i ? "" : "on"}">${t}</button>`)}
            </div>
            <div class="thumbslot"><div class="thumb"></div></div>
          </div>
          <div class="status"><span class="s1">Normal View</span><span class="s2">Ready</span><span class="s3"></span>
            <span class="sum">Sum=0<svg width="13" height="10"><path d="M0 0h13L6.5 10z" fill="#111"/></svg></span>
            <span class="s5"></span><span class="s6"></span><span class="s7"></span></div>
        </div>
      </footer>
      <p class="caption">scenario analysis</p>
    </main></div>`;
  }
}
